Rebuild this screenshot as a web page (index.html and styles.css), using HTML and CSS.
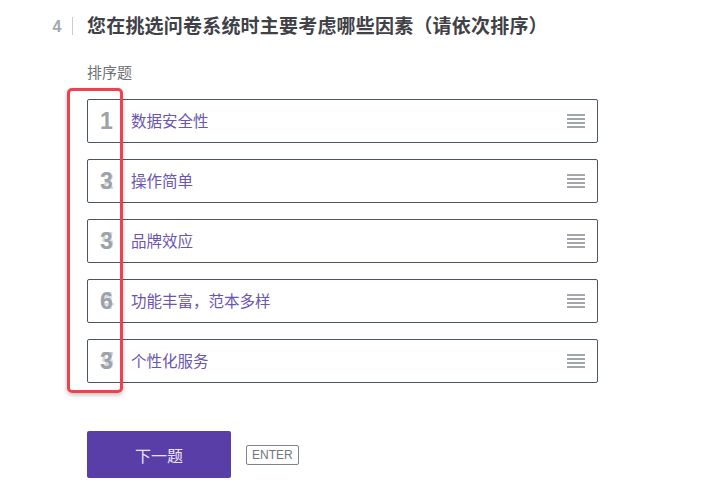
FILE: index.html
```html
<!DOCTYPE html>
<html lang="zh">
<head>
<meta charset="utf-8">
<link rel="stylesheet" href="styles.css">
</head>
<body>
<div class="question">
  <div class="q-head">
    <span class="q-num">4</span>
    <span class="q-sep"></span>
    <h1 class="q-title">您在挑选问卷系统时主要考虑哪些因素（请依次排序）</h1>
  </div>
  <div class="q-body">
    <div class="q-type">排序题</div>
    <div class="rank-list">
      <div class="rank-item">
        <span class="rank-no"><span class="d">1</span></span>
        <span class="rank-text">数据安全性</span>
        <span class="handle"><i></i><i></i><i></i><i></i></span>
      </div>
      <div class="rank-item">
        <span class="rank-no"><span class="d">3</span><span class="d ghost">2</span></span>
        <span class="rank-text">操作简单</span>
        <span class="handle"><i></i><i></i><i></i><i></i></span>
      </div>
      <div class="rank-item">
        <span class="rank-no"><span class="d">3</span><span class="d ghost">5</span></span>
        <span class="rank-text">品牌效应</span>
        <span class="handle"><i></i><i></i><i></i><i></i></span>
      </div>
      <div class="rank-item">
        <span class="rank-no"><span class="d">6</span><span class="d ghost">4</span></span>
        <span class="rank-text">功能丰富，范本多样</span>
        <span class="handle"><i></i><i></i><i></i><i></i></span>
      </div>
      <div class="rank-item">
        <span class="rank-no"><span class="d">3</span><span class="d ghost">7</span><span class="d ghost">5</span></span>
        <span class="rank-text">个性化服务</span>
        <span class="handle"><i></i><i></i><i></i><i></i></span>
      </div>
      <div class="highlight"></div>
    </div>
    <div class="actions">
      <button class="next-btn">下一题</button>
      <span class="kbd">ENTER</span>
    </div>
  </div>
</div>
</body>
</html>
```
FILE: styles.css
```css
html, body {
  margin: 0;
  padding: 0;
  background: #ffffff;
  font-family: "Noto Sans CJK SC", "Liberation Sans", sans-serif;
}
.question {
  padding: 13px 0 0 50px;
}
.q-head {
  display: flex;
  align-items: center;
  height: 24px;
}
.q-num {
  width: 14px;
  font-family: "Liberation Sans", sans-serif;
  font-size: 16px;
  font-weight: bold;
  color: #a4a8ad;
  text-align: center;
  padding-top: 3px;
}
.q-sep {
  width: 1px;
  height: 18px;
  background: #c9cdd2;
  margin: 2px 14px 0 8px;
}
.q-title {
  margin: 0;
  font-size: 19px;
  line-height: 24px;
  font-weight: bold;
  color: #3f4146;
  letter-spacing: 0.2px;
}
.q-body {
  padding-left: 37px;
}
.q-type {
  margin-top: 24px;
  font-size: 15px;
  line-height: 22px;
  color: #6e7176;
}
.rank-list {
  position: relative;
  margin-top: 16px;
  width: 511px;
  display: flex;
  flex-direction: column;
  gap: 16px;
}
.rank-item {
  height: 42px;
  border: 1px solid #4c5562;
  border-radius: 2px;
  display: flex;
  align-items: center;
  box-sizing: content-box;
}
.rank-no {
  position: relative;
  width: 36px;
  margin-left: 7px;
  height: 42px;
  font-family: "Liberation Sans", sans-serif;
  font-weight: bold;
  font-size: 23px;
  color: #9ca2a8;
}
.rank-no .d {
  position: absolute;
  left: 5px;
  top: 8px;
  line-height: 26px;
}
.rank-no .ghost {
  opacity: 0.4;
  left: 6px;
}
.rank-text {
  flex: 1;
  font-size: 15.5px;
  color: #6a55b3;
  margin-bottom: 2px;
}
.handle {
  width: 18px;
  margin-right: 12px;
  display: flex;
  flex-direction: column;
  gap: 2px;
}
.handle i {
  display: block;
  height: 2px;
  background: #a3a7ab;
}
.highlight {
  position: absolute;
  left: -20px;
  top: -11px;
  width: 50px;
  height: 299px;
  border: 3px solid #f0414f;
  border-radius: 5px;
  box-shadow: 0 2px 4px rgba(0, 0, 0, 0.25);
}
.actions {
  margin-top: 48px;
  display: flex;
  align-items: center;
}
.next-btn {
  width: 144px;
  height: 47px;
  border: none;
  border-radius: 2px;
  background: #5a3ea8;
  color: #e8e4f5;
  font-family: "Noto Sans CJK SC", sans-serif;
  font-size: 16px;
  padding: 0;
}
.kbd {
  margin-left: 15px;
  border: 1px solid #7d8591;
  border-radius: 2px;
  font-family: "Liberation Sans", sans-serif;
  font-size: 12px;
  color: #6f7580;
  padding: 2px 5px;
  line-height: 14px;
}
```
